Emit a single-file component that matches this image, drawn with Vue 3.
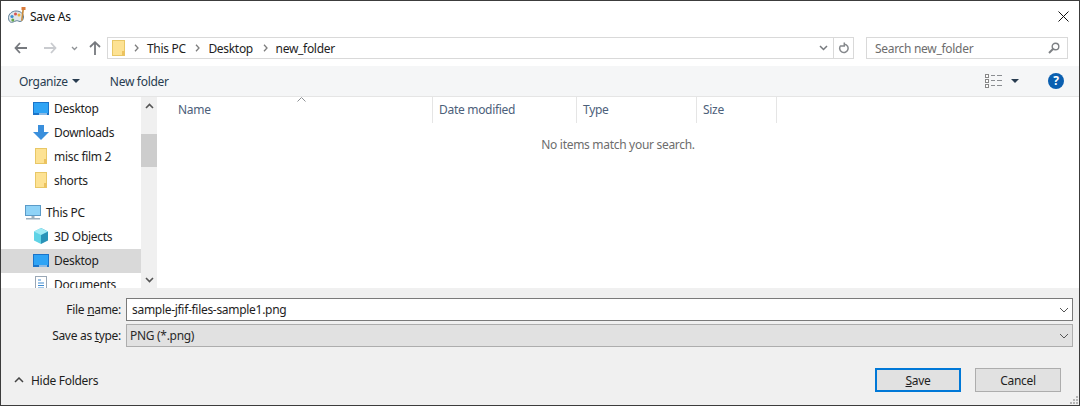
<script setup>
const columns = [
  { label: 'Name', width: 275, pad: 20 },
  { label: 'Date modified', width: 144, pad: 6 },
  { label: 'Type', width: 120, pad: 6 },
  { label: 'Size', width: 80, pad: 6 }
]
</script>

<template>
  <div class="win">
    <div class="title">
      <svg class="appicon" width="18" height="18" viewBox="0 0 18 18">
        <path d="M.5 10.500c0-3.500 3.500-6.500 7.500-6.500 4.500 0 7.500 2.500 7.500 6 0 2.500-1.500 4.500-3.500 4.500-1.500 0-2.300-1.200-3.800-.7C6 14.500 4 16 2.300 15 1 14.200.5 12.500.5 10.500z" fill="#dfe6ea" stroke="#5f7f95"/>
        <circle cx="4" cy="9.500" r="1.600" fill="#3b8fd0"/>
        <circle cx="7.500" cy="7" r="1.500" fill="#d9534f"/>
        <circle cx="4.800" cy="13" r="1.500" fill="#65a844"/>
        <circle cx="11" cy="8" r="1.500" fill="#e7b43a"/>
        <path d="M14.300 2.500l1.700.3-1.500 11h-1.500z" fill="#c98a3c"/>
        <rect x="13.500" y="0" width="4" height="3" fill="#d97b3a"/>
      </svg>
      <span class="title-text">Save As</span>
      <svg class="close" width="11" height="11" viewBox="0 0 11 11"><path d="M.5.500l10 10M10.500.500l-10 10" stroke="#111" stroke-width="1" fill="none"/></svg>
    </div>

    <div class="nav">
      <div class="nav-btns">
        <svg width="13" height="12" viewBox="0 0 13 12"><path d="M6 1L1.500 6 6 11M2 6h11" stroke="#76797e" stroke-width="1.800" fill="none"/></svg>
        <svg class="fwd" width="13" height="12" viewBox="0 0 13 12"><path d="M7 1l4.500 5L7 11M11 6H0" stroke="#c9cbcf" stroke-width="1.800" fill="none"/></svg>
        <svg class="drop" width="7" height="5" viewBox="0 0 7 5"><path d="M1 1l2.500 2.500L6 1" stroke="#8f9296" stroke-width="1.300" fill="none"/></svg>
        <svg class="up" width="12" height="14" viewBox="0 0 12 14"><path d="M1 6l5-4.800L11 6M6 2v12" stroke="#76797e" stroke-width="1.800" fill="none"/></svg>
      </div>
      <div class="address">
        <svg class="folder-small" width="13" height="16" viewBox="0 0 13 16">
          <rect x=".5" y=".5" width="12" height="15" fill="#fde293" stroke="#e8c766"/>
          <rect x="10" y="11" width="2.500" height="4.500" fill="#ecc25f"/>
        </svg>
        <svg class="sep" width="5" height="8" viewBox="0 0 5 8"><path d="M1 .8L4 4 1 7.200" stroke="#7d7d7d" stroke-width="1.300" fill="none"/></svg>
        <span class="crumb">This PC</span>
        <svg class="sep" width="5" height="8" viewBox="0 0 5 8"><path d="M1 .8L4 4 1 7.200" stroke="#7d7d7d" stroke-width="1.300" fill="none"/></svg>
        <span class="crumb">Desktop</span>
        <svg class="sep" width="5" height="8" viewBox="0 0 5 8"><path d="M1 .8L4 4 1 7.200" stroke="#7d7d7d" stroke-width="1.300" fill="none"/></svg>
        <span class="crumb">new_folder</span>
        <svg class="addr-chev" width="9" height="6" viewBox="0 0 9 6"><path d="M1 1l3.500 3.500L8 1" stroke="#76797e" stroke-width="1.500" fill="none"/></svg>
        <div class="refresh">
          <svg width="11" height="12" viewBox="0 0 11 12"><path d="M6.500 2.200A4.200 4.200 0 1 1 2.800 3.500M6.300.5v3.400H3" stroke="#85888c" stroke-width="1.500" fill="none"/></svg>
        </div>
      </div>
      <div class="search">
        <span>Search new_folder</span>
        <svg width="12" height="12" viewBox="0 0 12 12"><circle cx="7.500" cy="4.500" r="3.300" stroke="#7d8084" stroke-width="1.400" fill="none"/><path d="M5 7L1 11" stroke="#7d8084" stroke-width="2" fill="none"/></svg>
      </div>
    </div>

    <div class="toolbar">
      <span class="tool organize">Organize</span>
      <span class="caret"></span>
      <span class="tool newfolder">New folder</span>
      <svg class="views" width="17" height="14" viewBox="0 0 17 14">
        <rect x=".5" y=".5" width="3" height="3" fill="#fff" stroke="#888"/>
        <rect x=".5" y="5.500" width="3" height="3" fill="#fff" stroke="#888"/>
        <rect x=".5" y="10.500" width="3" height="3" fill="#fff" stroke="#888"/>
        <path d="M6 1.500h4M12 1.500h5M6 6.500h4M12 6.500h5M6 11.500h4M12 11.500h5" stroke="#8a8d91"/>
      </svg>
      <span class="caret view-caret"></span>
      <span class="help">?</span>
    </div>

    <div class="body">
      <div class="side">
        <div class="tree">
          <div class="row first">
            <svg width="16" height="13" viewBox="0 0 16 13"><rect width="16" height="13" fill="#1b74c9"/><rect x="1" y="1" width="14" height="10" fill="#2fa4f5"/><rect x="6" y="11.500" width="8" height="1" fill="#fff"/></svg>
            <span>Desktop</span>
          </div>
          <div class="row">
            <svg width="16" height="15" viewBox="0 0 16 15"><path d="M5 0h6v7h5l-8 8-8-8h5z" fill="#3a8fdc"/></svg>
            <span>Downloads</span>
          </div>
          <div class="row">
            <svg width="16" height="16" viewBox="0 0 16 16"><rect x="2.500" y=".5" width="11" height="15" fill="#fde293" stroke="#e8c766"/><rect x="11" y="11" width="2.500" height="4.500" fill="#ecc25f"/></svg>
            <span>misc film 2</span>
          </div>
          <div class="row">
            <svg width="16" height="16" viewBox="0 0 16 16"><rect x="2.500" y=".5" width="11" height="15" fill="#fde293" stroke="#e8c766"/><rect x="11" y="11" width="2.500" height="4.500" fill="#ecc25f"/></svg>
            <span>shorts</span>
          </div>
          <div class="row pc">
            <svg width="16" height="15" viewBox="0 0 16 15"><rect width="16" height="11" fill="#5b9bc8"/><rect x="1" y="1" width="14" height="9" fill="#8fd3f7"/><rect x="6.500" y="11" width="3" height="2" fill="#9db0bd"/><rect x="1" y="13" width="14" height="1.500" fill="#9db0bd"/></svg>
            <span>This PC</span>
          </div>
          <div class="row">
            <svg width="16" height="16" viewBox="0 0 16 16"><path d="M8 0l7 3.500v9L8 16z" fill="#2a93b8"/><path d="M8 0L1 3.500v9L8 16z" fill="#5fd3e6"/><path d="M8 0l7 3.500L8 7 1 3.500z" fill="#9feaf5"/></svg>
            <span>3D Objects</span>
          </div>
          <div class="row selected">
            <svg width="16" height="13" viewBox="0 0 16 13"><rect width="16" height="13" fill="#1b74c9"/><rect x="1" y="1" width="14" height="10" fill="#2fa4f5"/><rect x="6" y="11.500" width="8" height="1" fill="#fff"/></svg>
            <span>Desktop</span>
          </div>
          <div class="row">
            <svg width="16" height="16" viewBox="0 0 16 16"><rect x="2.500" y=".5" width="11" height="15" fill="#fff" stroke="#9aa7b5"/><path d="M5 4h3M5 7h6M5 9.500h6M5 12h6" stroke="#3e8bd0"/></svg>
            <span>Documents</span>
          </div>
        </div>
        <div class="scroll">
          <svg class="arrow" width="9" height="6" viewBox="0 0 9 6"><path d="M1 5l3.500-3.500L8 5" stroke="#555" stroke-width="1.600" fill="none"/></svg>
          <div class="thumb"></div>
          <svg class="arrow down" width="9" height="6" viewBox="0 0 9 6"><path d="M1 1l3.500 3.500L8 1" stroke="#555" stroke-width="1.600" fill="none"/></svg>
        </div>
      </div>
      <div class="list">
        <div class="head">
          <div v-for="c in columns" :key="c.label" class="col" :style="{ width: c.width + 'px', paddingLeft: c.pad + 'px' }">{{ c.label }}</div>
          <svg class="sort" width="9" height="5" viewBox="0 0 9 5"><path d="M.5 4.500l4-4 4 4" stroke="#8d9094" fill="none"/></svg>
        </div>
        <p class="empty">No items match your search.</p>
      </div>
    </div>

    <div class="panel">
      <div class="field">
        <label>File <u>n</u>ame:</label>
        <div class="input">
          <span>sample-jfif-files-sample1.png</span>
          <svg width="10" height="6" viewBox="0 0 10 6"><path d="M1 1l4 4 4-4" stroke="#555" fill="none"/></svg>
        </div>
      </div>
      <div class="field second">
        <label>Save as <u>t</u>ype:</label>
        <div class="input type">
          <span>PNG (*.png)</span>
          <svg width="10" height="6" viewBox="0 0 10 6"><path d="M1 1l4 4 4-4" stroke="#555" fill="none"/></svg>
        </div>
      </div>
      <div class="foot">
        <div class="hide">
          <svg width="10" height="6" viewBox="0 0 10 6"><path d="M1 5l4-4 4 4" stroke="#444" stroke-width="1.500" fill="none"/></svg>
          <span>Hide Folders</span>
        </div>
        <div class="btn primary"><span><u>S</u>ave</span></div>
        <div class="btn cancel">Cancel</div>
      </div>
      <svg class="grip" width="10" height="10" viewBox="0 0 10 10" fill="#b5b5b5">
        <rect x="7" y="1" width="2" height="2"/><rect x="4" y="4" width="2" height="2"/><rect x="7" y="4" width="2" height="2"/>
        <rect x="1" y="7" width="2" height="2"/><rect x="4" y="7" width="2" height="2"/><rect x="7" y="7" width="2" height="2"/>
      </svg>
    </div>
  </div>
</template>

<style>
html, body { margin: 0; background: #fff; }
</style>

<style scoped>
* { box-sizing: border-box; }
.win {
  position: relative;
  width: 1080px;
  height: 406px;
  border: 1px solid #3c3c3c;
  background: #fff;
  font-family: "Noto Sans", "Open Sans", sans-serif;
  font-size: 12px;
  letter-spacing: -0.3px;
  color: #1e1e1e;
  overflow: hidden;
  display: flex;
  flex-direction: column;
}
.title { height: 32px; display: flex; align-items: center; padding-left: 7px; padding-bottom: 2px; flex: none; }
.appicon { margin-right: 4px; }
.title-text { color: #111; }
.close { margin-left: auto; margin-right: 10px; }
.nav { height: 33px; flex: none; display: flex; align-items: flex-start; padding-top: 4px; }
.nav-btns { width: 106px; height: 22px; display: flex; align-items: center; padding-left: 13px; flex: none; }
.fwd { margin-left: 17px; }
.drop { margin-left: 14px; }
.up { margin-left: 11px; }
.address { width: 747px; height: 22px; border: 1px solid #d9d9d9; display: flex; align-items: center; padding-left: 4px; color: #1e1e1e; flex: none; }
.folder-small { margin-right: 9px; }
.sep { flex: none; }
.crumb { margin: 0 9.600px 0 8px; }
.addr-chev { margin-left: auto; margin-right: 5px; }
.refresh { width: 20px; height: 20px; border-left: 1px solid #d9d9d9; display: flex; align-items: center; justify-content: center; }
.search { margin-left: 12px; width: 202px; height: 22px; border: 1px solid #d9d9d9; display: flex; align-items: center; justify-content: space-between; padding: 0 7px 0 8px; color: #6d6d6d; flex: none; }
.toolbar { height: 31px; flex: none; background: #f5f6f7; border-bottom: 1px solid #e5e5e5; display: flex; align-items: center; padding-left: 18px; color: #283c50; }
.caret { width: 0; height: 0; border-left: 4px solid transparent; border-right: 4px solid transparent; border-top: 4px solid #283c50; margin-left: 4px; }
.newfolder { margin-left: 30px; }
.views { margin-left: auto; }
.view-caret { margin-left: 9px; }
.help { width: 16px; height: 16px; border-radius: 50%; background: #0a5fb0; color: #fff; font-weight: 700; font-size: 12px; line-height: 16px; text-align: center; margin: 0 15px 0 29px; }
.body { height: 191px; flex: none; display: flex; overflow: hidden; }
.side { width: 156px; flex: none; display: flex; }
.tree { width: 140px; flex: none; overflow: hidden; }
.row { height: 24px; display: flex; align-items: center; padding-left: 32px; gap: 5px; flex: none; white-space: nowrap; }
.row.first { margin-top: -1px; }
.row.pc { margin-top: 8px; padding-left: 24px; gap: 5px; }
.row.selected { background: #d9d9d9; margin-top: 1px; margin-bottom: -1px; padding-bottom: 2px; }
.scroll { width: 16px; flex: none; background: #f0f0f0; position: relative; display: flex; flex-direction: column; align-items: center; }
.arrow { margin-top: 6px; flex: none; }
.thumb { width: 100%; height: 33px; background: #cdcdcd; margin-top: 25px; }
.arrow.down { margin-top: auto; margin-bottom: 5px; }
.list { flex: 1; padding-top: 0; position: relative; }
.head { height: 26px; display: flex; color: #4c607a; position: relative; padding-left: 1px; }
.col { border-right: 1px solid #e5e5e5; line-height: 26px; padding-top: 0; }
.sort { position: absolute; left: 140px; top: 0; }
.empty { margin: 0; text-align: center; color: #6d6d6d; padding-top: 13px; width: 922px; line-height: 18px; }
.panel { flex: 1; background: #f0f0f0; position: relative; padding-top: 10px; }
.field { display: flex; height: 23px; align-items: stretch; }
.field.second { margin-top: 3px; }
label { width: 125px; text-align: right; padding-right: 5px; line-height: 23px; color: #1e1e1e; flex: none; }
.input { width: 947px; border: 1px solid #7a7a7a; background: #fff; display: flex; align-items: center; justify-content: space-between; padding: 0 3px 0 5px; flex: none; }
.input.type { background: #e1e1e1; border-color: #adadad; padding-left: 3px; color: #2a2a2a; }
.foot { display: flex; align-items: center; margin-top: 21px; height: 24px; }
.hide { display: flex; align-items: center; gap: 7px; padding-left: 13px; color: #1e1e1e; }
.btn { width: 86px; height: 24px; border: 1px solid #adadad; background: #e1e1e1; display: flex; align-items: center; justify-content: center; color: #1e1e1e; }
.primary { margin-left: auto; border: 2px solid #0078d7; }
.cancel { margin-left: 14px; margin-right: 18px; }
.grip { position: absolute; right: 0; bottom: 0; }
</style>
